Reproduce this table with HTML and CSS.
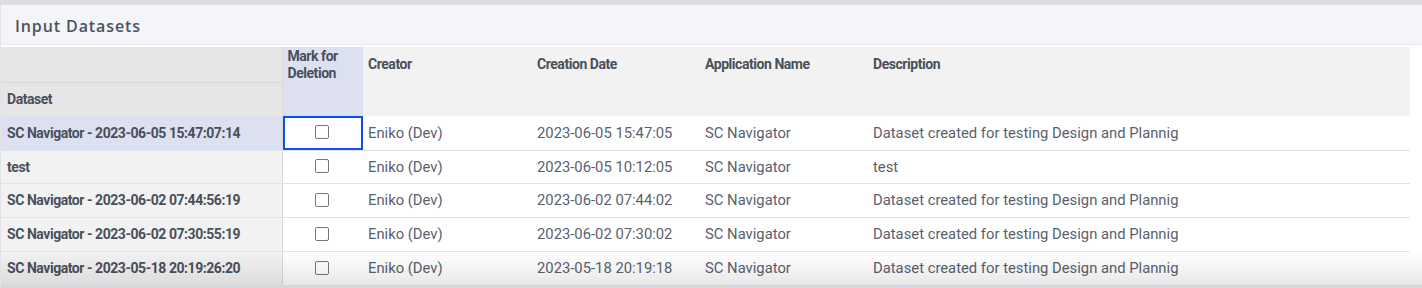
FILE: index.html
```html
<!DOCTYPE html>
<html>
<head>
<meta charset="utf-8">
<link rel="stylesheet" href="styles.css">
</head>
<body>
<div class="panel">
  <div class="panel-head">Input Datasets</div>
  <div class="grid-wrap">
    <table class="grid">
      <colgroup>
        <col class="c-ds"><col class="c-mark"><col class="c-cr"><col class="c-date"><col class="c-app"><col class="c-desc">
      </colgroup>
      <thead>
        <tr class="h1">
          <th class="ds ds-top"></th>
          <th class="mark">Mark for<br>Deletion</th>
          <th>Creator</th>
          <th>Creation Date</th>
          <th>Application Name</th>
          <th>Description</th>
        </tr>
        <tr class="h2">
          <th class="ds">Dataset</th>
          <th class="mark"></th>
          <th></th><th></th><th></th><th></th>
        </tr>
      </thead>
      <tbody>
        <tr class="sel">
          <td class="ds">SC Navigator - 2023-06-05 15:47:07:14</td>
          <td class="chk focus"><span class="box"></span></td>
          <td>Eniko (Dev)</td>
          <td>2023-06-05 15:47:05</td>
          <td>SC Navigator</td>
          <td>Dataset created for testing Design and Plannig</td>
        </tr>
        <tr class="short">
          <td class="ds">test</td>
          <td class="chk"><span class="box"></span></td>
          <td>Eniko (Dev)</td>
          <td>2023-06-05 10:12:05</td>
          <td>SC Navigator</td>
          <td>test</td>
        </tr>
        <tr>
          <td class="ds">SC Navigator - 2023-06-02 07:44:56:19</td>
          <td class="chk"><span class="box"></span></td>
          <td>Eniko (Dev)</td>
          <td>2023-06-02 07:44:02</td>
          <td>SC Navigator</td>
          <td>Dataset created for testing Design and Plannig</td>
        </tr>
        <tr>
          <td class="ds">SC Navigator - 2023-06-02 07:30:55:19</td>
          <td class="chk"><span class="box"></span></td>
          <td>Eniko (Dev)</td>
          <td>2023-06-02 07:30:02</td>
          <td>SC Navigator</td>
          <td>Dataset created for testing Design and Plannig</td>
        </tr>
        <tr>
          <td class="ds">SC Navigator - 2023-05-18 20:19:26:20</td>
          <td class="chk"><span class="box"></span></td>
          <td>Eniko (Dev)</td>
          <td>2023-05-18 20:19:18</td>
          <td>SC Navigator</td>
          <td>Dataset created for testing Design and Plannig</td>
        </tr>
      </tbody>
    </table>
    <div class="fade"></div>
  </div>
  <div class="bottom-band"></div>
</div>
</body>
</html>
```
FILE: styles.css
```css
html, body {
  margin: 0;
  padding: 0;
  background: #ffffff;
}
body {
  border-top: 5px solid #dcdde1;
  font-family: Roboto, "Liberation Sans", sans-serif;
}
.panel {
  border-left: 1px solid #e2e3e7;
  height: 283px;
  display: flex;
  flex-direction: column;
}
.panel-head {
  height: 40px;
  flex: none;
  border-bottom: 1px solid #e8e9ee;
  background: #f4f5f9;
  box-sizing: border-box;
  padding-left: 14px;
  padding-top: 2px;
  display: flex;
  align-items: center;
  font-family: "Open Sans", sans-serif;
  font-weight: 600;
  font-size: 16px;
  letter-spacing: 0.9px;
  color: #4b5162;
}
.grid-wrap {
  position: relative;
  flex: 1;
  margin-top: 2px;
  overflow: hidden;
}
.grid {
  border-collapse: collapse;
  table-layout: fixed;
  width: 1409px;
}
.c-ds { width: 281px; }
.c-mark { width: 81px; }
.c-cr { width: 169px; }
.c-date { width: 168px; }
.c-app { width: 168px; }
.c-desc { width: 542px; }

.grid th {
  background: #f2f2f2;
  font-weight: 700;
  font-size: 14px;
  letter-spacing: -0.45px;
  color: #4a4f5c;
  text-align: left;
  padding: 0 5px;
  line-height: 17px;
  vertical-align: middle;
  box-sizing: border-box;
}
.grid .h1 th { height: 35px; }
.grid .h2 th { height: 34px; }
.grid th.ds {
  background: #e6e6e6;
  border-right: 1px solid #d9d9d9;
  padding-left: 6px;
}
.grid th.ds-top { border-bottom: 1px solid #d9d9d9; }
.grid th.mark {
  background: #dce0f0;
  padding: 1px 5px 0;
}
.grid td {
  height: 34px;
  padding: 0 5px;
  font-size: 14.8px;
  color: #5a5f6e;
  border-bottom: 1px solid #e3e3e3;
  white-space: nowrap;
  box-sizing: border-box;
}
.grid tr.short td { height: 33px; }
.grid td.ds {
  background: #f2f2f2;
  font-weight: 700;
  font-size: 14px;
  letter-spacing: -0.45px;
  color: #4a4f5c;
  border-right: 1px solid #d9d9d9;
  padding-left: 6px;
}
.grid tr.sel td.ds { background: #dce0f0; }
.grid td.chk {
  text-align: center;
  padding: 0 1px 0 0;
}
.grid td.chk.focus {
  box-shadow: inset 0 0 0 2px #0a4ff5;
}
.box {
  display: inline-block;
  width: 12px;
  height: 12px;
  border: 1px solid #767676;
  border-radius: 2px;
  background: #fff;
  vertical-align: middle;
  margin-top: -3px;
}
.fade {
  position: absolute;
  left: 0;
  right: 0;
  bottom: 0;
  height: 34px;
  background: linear-gradient(to bottom, rgba(0,0,0,0) 0%, rgba(0,0,0,0.09) 100%);
  pointer-events: none;
}
.bottom-band {
  height: 3px;
  flex: none;
  background: #d6d7db;
}
```
